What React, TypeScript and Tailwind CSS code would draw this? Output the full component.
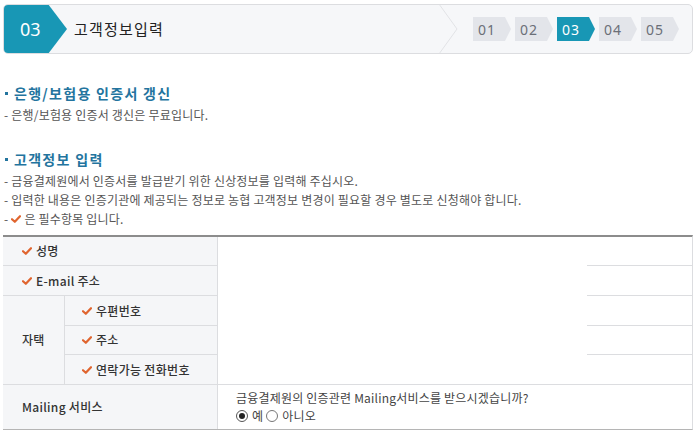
import React from "react";

const FONT = { fontFamily: '"Noto Sans CJK KR", "Noto Sans", sans-serif' };

const Check = () => (
  <svg width="10" height="8" viewBox="0 0 10 8" className="shrink-0">
    <path d="M1 4.2 L3.8 6.8 L9 1.2" fill="none" stroke="#e0652f" strokeWidth="2.2" strokeLinecap="round" strokeLinejoin="round" />
  </svg>
);

const Step = ({ n, active }: { n: string; active?: boolean }) => (
  <div
    className={
      "flex h-[24px] w-[38px] items-center pl-[5px] text-[14px] tracking-[1px] [clip-path:polygon(0_0,32px_0,38px_50%,32px_100%,0_100%)] " +
      (active ? "bg-[#1897b5] text-white" : "bg-[#e3e5ea] text-[#6b6f78]")
    }
    style={{ fontFamily: '"Noto Sans", sans-serif' }}
  >
    {n}
  </div>
);

const Bullet = ({ children }: { children: React.ReactNode }) => (
  <div className="flex items-center gap-[6px] text-[14px] font-bold leading-[20px] tracking-[1.3px] text-[#23749e]">
    <span className="ml-[1px] h-[3px] w-[3px] bg-[#23749e]" />
    {children}
  </div>
);

const Label = ({ children, inner }: { children: React.ReactNode; inner?: boolean }) => (
  <div
    className={
      "flex items-center gap-[4px] border-b border-[#dcdde0] bg-[#f5f6f8] text-[12px] font-medium tracking-[0.3px] text-[#333] " +
      (inner ? "pl-[17px]" : "col-span-2 pl-[19px]")
    }
  >
    <Check />
    {children}
  </div>
);

const Value = ({ full }: { full?: boolean }) => (
  <div className={"flex justify-end border-l border-[#dcdde0] " + (full ? "border-b border-b-[#dcdde0]" : "")}>
    {!full && <div className="w-[105px] border-b border-[#dcdde0]" />}
  </div>
);

export default function App() {
  return (
    <div className="h-[430px] w-[700px] overflow-hidden bg-white pt-[4px] pl-[3px]" style={FONT}>
      {/* header */}
      <div className="flex h-[50px] w-[690px] items-center overflow-hidden rounded-[5px] border border-[#dcdde0] bg-[#f6f7f9]">
        <div className="-ml-px flex h-[50px] w-[64px] items-center rounded-l-[5px] bg-[#1897b5] pl-[17px] text-[18px] text-white [clip-path:polygon(0_0,45px_0,64px_50%,45px_100%,0_100%)]" style={{ fontFamily: '"Noto Sans", sans-serif' }}>
          03
        </div>
        <div className="ml-[7px] flex-1 text-[15px] tracking-[1.2px] text-[#222]">고객정보입력</div>
        <svg width="20" height="50" viewBox="0 0 20 50" className="shrink-0">
          <polyline points="1,0 19,25 1,50" fill="none" stroke="#e2e3e6" strokeWidth="1" />
        </svg>
        <div className="ml-[15px] mr-[13px] flex gap-[4px]">
          <Step n="01" />
          <Step n="02" />
          <Step n="03" active />
          <Step n="04" />
          <Step n="05" />
        </div>
      </div>

      <div className="mt-[29px] pl-px">
        <Bullet>은행/보험용 인증서 갱신</Bullet>
        <div className="mt-[2px] text-[12px] leading-[19px] tracking-[0.2px] text-[#555]">- 은행/보험용 인증서 갱신은 무료입니다.</div>
      </div>

      <div className="mt-[25px] pl-px">
        <Bullet>고객정보 입력</Bullet>
        <div className="mt-[2px] text-[12px] leading-[19px] tracking-[0.2px] text-[#555]">
          <div>- 금융결제원에서 인증서를 발급받기 위한 신상정보를 입력해 주십시오.</div>
          <div>- 입력한 내용은 인증기관에 제공되는 정보로 농협 고객정보 변경이 필요할 경우 별도로 신청해야 합니다.</div>
          <div className="flex items-center gap-[3px]">
            - <Check /> 은 필수항목 입니다.
          </div>
        </div>
      </div>

      {/* table */}
      <div className="mt-[7px] grid w-[690px] grid-cols-[62px_152px_1fr] grid-rows-[29px_30px_30px_29px_30px_44px] border-t-2 border-b border-t-[#8c8c8c] border-b-[#b5b5b5] border-r border-r-[#dcdde0]">
        <Label>성명</Label>
        <Value />
        <Label>E-mail 주소</Label>
        <Value />
        <div className="row-span-3 flex items-center border-r border-b border-[#dcdde0] bg-[#f5f6f8] pl-[19px] text-[12px] font-medium tracking-[0.3px] text-[#333]">
          자택
        </div>
        <Label inner>우편번호</Label>
        <Value />
        <Label inner>주소</Label>
        <Value />
        <Label inner>연락가능 전화번호</Label>
        <Value full />
        <div className="col-span-2 flex items-center bg-[#f5f6f8] pl-[19px] text-[12px] font-medium tracking-[0.3px] text-[#333]">
          Mailing 서비스
        </div>
        <div className="flex flex-col justify-center border-l border-[#dcdde0] pl-[18px] text-[12px] leading-[18px] tracking-[0.2px] text-[#444]">
          <div>금융결제원의 인증관련 Mailing서비스를 받으시겠습니까?</div>
          <div className="flex items-center">
            <span className="flex h-[12px] w-[12px] items-center justify-center rounded-full border border-[#555] bg-white">
              <span className="h-[6px] w-[6px] rounded-full bg-[#222]" />
            </span>
            <span className="ml-[4px]">예</span>
            <span className="ml-[3px] h-[12px] w-[12px] rounded-full border border-[#777] bg-white" />
            <span className="ml-[4px]">아니오</span>
          </div>
        </div>
      </div>
    </div>
  );
}
